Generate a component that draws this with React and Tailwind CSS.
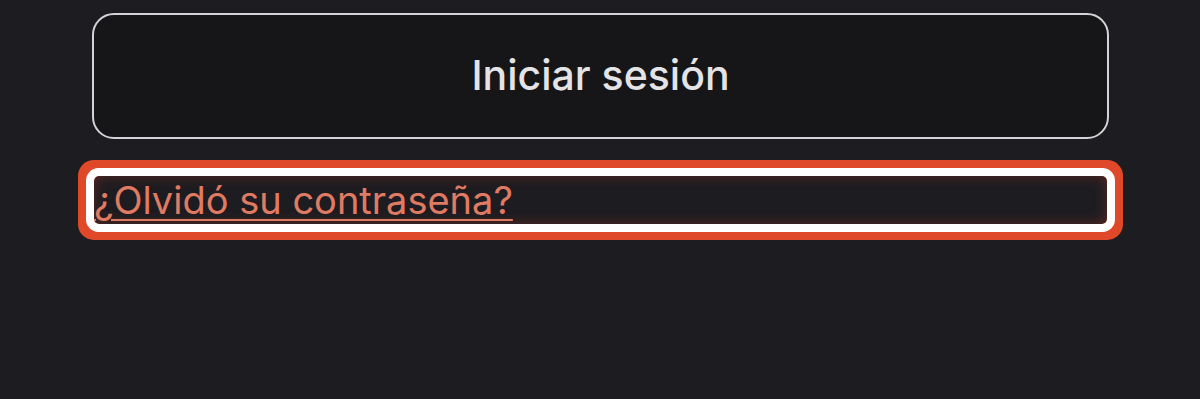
export default function App() {
  return (
    <div className="min-h-[399px] w-full bg-[#1d1c21] pl-[92px] pr-[91px] pt-[13px]" style={{ fontFamily: 'Inter, "Liberation Sans", sans-serif' }}>
      {/* Sign in button */}
      <button className="flex h-[126px] w-full items-center justify-center rounded-[22px] border-2 border-[#d4d4d8] bg-[#161618] text-[41px] font-medium text-[#e4e4e7]">
        Iniciar sesión
      </button>

      {/* Forgot password link, focused */}
      <div className="mt-[37px] px-[2px]">
        <a
          href="#"
          className="block h-[48px] rounded-[5px] text-[38px] leading-[48px] text-[#e07b63] underline decoration-2 underline-offset-[5px] shadow-[inset_0_0_14px_rgba(200,70,40,0.35),0_0_0_8px_#ffffff,0_0_0_16px_#e0482a]"
        >
          ¿Olvidó su contraseña?
        </a>
      </div>
    </div>
  );
}
